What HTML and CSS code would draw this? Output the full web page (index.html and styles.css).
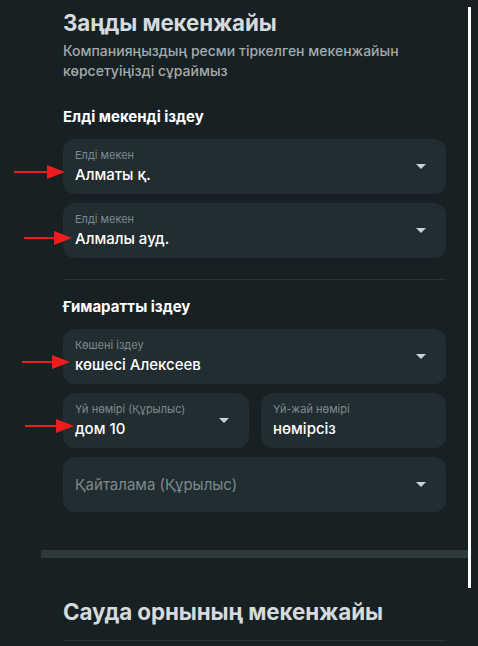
FILE: index.html
```html
<!DOCTYPE html>
<html lang="kk">
<head>
<meta charset="utf-8">
<link rel="stylesheet" href="styles.css">
</head>
<body>
<div class="page">
  <section class="section">
    <h1 class="title">Заңды мекенжайы</h1>
    <p class="subtitle">Компанияңыздың ресми тіркелген мекенжайын көрсетуіңізді сұраймыз</p>

    <h2 class="group-title">Елді мекенді іздеу</h2>
    <div class="fields">
      <div class="field">
        <div class="field-text">
          <span class="label">Елді мекен</span>
          <span class="value">Алматы қ.</span>
        </div>
        <span class="caret"></span>
        <svg class="arrow arrow-1" width="51" height="16" viewBox="0 0 51 16"><path d="M0 7h33V1l18 7-18 7V9H0z" fill="#ee1c1c"/></svg>
      </div>
      <div class="field">
        <div class="field-text">
          <span class="label">Елді мекен</span>
          <span class="value">Алмалы ауд.</span>
        </div>
        <span class="caret"></span>
        <svg class="arrow arrow-2" width="48" height="16" viewBox="0 0 48 16"><path d="M0 7h30V1l18 7-18 7V9H0z" fill="#ee1c1c"/></svg>
      </div>
    </div>

    <hr class="divider">

    <h2 class="group-title group-title-second">Ғимаратты іздеу</h2>
    <div class="fields">
      <div class="field">
        <div class="field-text">
          <span class="label">Көшені іздеу</span>
          <span class="value">көшесі Алексеев</span>
        </div>
        <span class="caret"></span>
        <svg class="arrow arrow-3" width="48" height="16" viewBox="0 0 48 16"><path d="M0 7h30V1l18 7-18 7V9H0z" fill="#ee1c1c"/></svg>
      </div>
      <div class="field-row">
        <div class="field">
          <div class="field-text">
            <span class="label">Үй нөмірі (Құрылыс)</span>
            <span class="value">дом 10</span>
          </div>
          <span class="caret"></span>
          <svg class="arrow arrow-4" width="49" height="16" viewBox="0 0 49 16"><path d="M0 7h31V1l18 7-18 7V9H0z" fill="#ee1c1c"/></svg>
        </div>
        <div class="field">
          <div class="field-text">
            <span class="label">Үй-жай нөмірі</span>
            <span class="value">нөмірсіз</span>
          </div>
        </div>
      </div>
      <div class="field">
        <div class="field-text">
          <span class="placeholder">Қайталама (Құрылыс)</span>
        </div>
        <span class="caret"></span>
      </div>
    </div>
  </section>

  <div class="bar"></div>

  <section class="section section-next">
    <h1 class="title">Сауда орнының мекенжайы</h1>
    <hr class="divider divider-bottom">
  </section>

  <div class="scroll-thumb"></div>
</div>
</body>
</html>
```

FILE: styles.css
```css
* { box-sizing: border-box; }
html, body {
  margin: 0;
  padding: 0;
  background: #172124;
  height: 100%;
  overflow: hidden;
}
body {
  font-family: Inter, "Noto Sans", sans-serif;
  color: #ffffff;
}
.page {
  position: relative;
  width: 427px;
  margin-left: 41px;
  min-height: 646px;
}
.section {
  padding: 0 22px;
}
.title {
  margin: 0;
  padding-top: 9px;
  font-size: 22.3px;
  line-height: 28px;
  font-weight: 700;
  color: #d6dadd;
  letter-spacing: -0.1px;
}
.subtitle {
  margin: 4px 0 0;
  font-size: 14px;
  line-height: 20px;
  font-weight: 500;
  color: #a3aaad;
  width: 370px;
}
.group-title {
  margin: 26px 0 0;
  font-size: 15px;
  line-height: 20px;
  font-weight: 700;
  color: #ffffff;
}
.group-title-second {
  margin-top: 17px;
}
.fields {
  margin-top: 12px;
  display: flex;
  flex-direction: column;
  gap: 9px;
}
.field-row {
  display: grid;
  grid-template-columns: 186px 185px;
  gap: 12px;
}
.field {
  position: relative;
  height: 55px;
  background: #212d31;
  border-radius: 12px;
  display: flex;
  align-items: center;
  justify-content: space-between;
  padding: 0 20px 0 12px;
}
.field-text {
  display: flex;
  flex-direction: column;
}
.label {
  font-size: 11px;
  line-height: 14px;
  color: #7f898c;
}
.value {
  margin-top: 3px;
  font-size: 15px;
  line-height: 20px;
  font-weight: 500;
  color: #ffffff;
}
.placeholder {
  font-size: 15px;
  line-height: 20px;
  color: #7f898c;
}
.caret {
  width: 0;
  height: 0;
  border-left: 5px solid transparent;
  border-right: 5px solid transparent;
  border-top: 5px solid #c9d1d8;
}
.divider {
  margin: 21px 0 0;
  border: 0;
  height: 1px;
  background: #2a3538;
}
.bar {
  margin-top: 38px;
  height: 8px;
  background: #2e3a3a;
}
.section-next .title {
  padding-top: 40px;
  font-size: 22.4px;
}
.divider-bottom {
  margin-top: 14px;
}
.arrow {
  position: absolute;
  top: 50%;
}
.arrow-1 { left: -49px; margin-top: -3px; }
.arrow-2 { left: -39px; margin-top: -1px; }
.arrow-3 { left: -41px; margin-top: -3px; }
.arrow-4 { left: -38px; margin-top: -3px; }
.scroll-thumb {
  position: absolute;
  left: 427px;
  top: 7px;
  width: 3px;
  height: 581px;
  background: #ffffff;
}
```
